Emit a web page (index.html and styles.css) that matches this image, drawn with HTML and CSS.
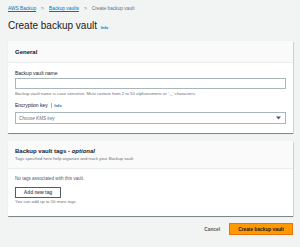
FILE: index.html
```html
<!DOCTYPE html>
<html>
<head>
<meta charset="utf-8">
<link rel="stylesheet" href="styles.css">
</head>
<body>
<nav class="crumbs">
  <a class="crumb-link" href="#">AWS Backup</a>
  <span class="sep">&gt;</span>
  <a class="crumb-link" href="#">Backup vaults</a>
  <span class="sep">&gt;</span>
  <span class="crumb-current">Create backup vault</span>
</nav>
<div class="page-head">
  <h1 class="title">Create backup vault</h1>
  <span class="info">Info</span>
</div>
<section class="card">
  <div class="card-head">
    <h2 class="card-title">General</h2>
  </div>
  <div class="card-body">
    <div class="field">
      <label class="label">Backup vault name</label>
      <div class="input"></div>
      <div class="desc">Backup vault name is case sensitive. Must contain from 2 to 50 alphanumeric or '-_' characters.</div>
    </div>
    <div class="field field-2">
      <div class="label-row"><span class="label">Encryption key</span><span class="vbar"></span><span class="info">Info</span></div>
      <div class="select"><span class="placeholder">Choose KMS key</span><svg class="caret" width="5" height="4" viewBox="0 0 5 4"><path d="M0 0.5h5L2.5 3.5z" fill="#545b64"/></svg></div>
    </div>
  </div>
</section>
<section class="card card-2">
  <div class="card-head card-head-2">
    <h2 class="card-title">Backup vault tags - <i>optional</i></h2>
    <div class="head-desc">Tags specified here help organize and track your Backup vault</div>
  </div>
  <div class="card-body card-body-2">
    <div class="empty">No tags associated with this vault.</div>
    <button class="btn">Add new tag</button>
    <div class="desc">You can add up to 50 more tags.</div>
  </div>
</section>
<div class="actions">
  <button class="btn-link">Cancel</button>
  <button class="btn-primary">Create backup vault</button>
</div>
</body>
</html>
```

FILE: styles.css
```css
html, body {
  margin: 0;
  padding: 0;
}
body {
  background: #f2f3f3;
  font-family: "Liberation Sans", Arial, sans-serif;
  color: #16191f;
  padding: 0 7px 0 8px;
  width: 300px;
  height: 247px;
  box-sizing: border-box;
  overflow: hidden;
}
.crumbs {
  display: flex;
  align-items: center;
  gap: 4px;
  height: 14px;
  font-size: 4.8px;
  padding-top: 1px;
}
.crumb-link {
  color: #0073bb;
  text-decoration: underline;
}
.sep {
  color: #687078;
  font-size: 5px;
  padding: 0 1px;
}
.crumb-current {
  color: #687078;
}
.page-head {
  display: flex;
  align-items: baseline;
  gap: 4px;
  height: 26px;
  padding-top: 5px;
  box-sizing: border-box;
}
.title {
  margin: 0;
  font-size: 10px;
  font-weight: 400;
  line-height: 12px;
}
.info {
  color: #0073bb;
  font-weight: 700;
  font-size: 4px;
}
.card {
  background: #fff;
  box-shadow: 0 0.5px 0.5px 0 rgba(0,28,36,.3), 0.5px 0.5px 0.5px 0 rgba(0,28,36,.15), -0.5px 0.5px 0.5px 0 rgba(0,28,36,.15);
}
.card-head {
  background: #fafafa;
  border-bottom: 1px solid #eaeded;
  padding: 7px 7px 0;
  height: 22px;
  box-sizing: border-box;
}
.card-title {
  margin: 0;
  font-size: 6px;
  font-weight: 700;
  line-height: 8px;
}
.card-title i {
  font-style: italic;
}
.card-body {
  padding: 7px 7px 9px;
  height: 70px;
  box-sizing: border-box;
}
.field {
  display: flex;
  flex-direction: column;
}
.label {
  font-size: 5px;
  line-height: 6px;
  color: #16191f;
}
.input {
  margin-top: 2px;
  height: 11px;
  border: 0.7px solid #aab7b8;
  box-sizing: border-box;
  background: #fff;
}
.desc {
  font-size: 4.3px;
  line-height: 6px;
  color: #687078;
  margin-top: 2px;
}
.field-2 {
  margin-top: 5px;
}
.label-row {
  display: flex;
  align-items: center;
  gap: 3px;
  height: 6px;
}
.vbar {
  width: 0.5px;
  height: 5px;
  background: #aab7b8;
}
.select {
  margin-top: 4px;
  height: 12px;
  border: 0.7px solid #aab7b8;
  box-sizing: border-box;
  display: flex;
  align-items: center;
  justify-content: space-between;
  padding: 0 4px 0 3px;
}
.placeholder {
  font-size: 4.6px;
  font-style: italic;
  color: #687078;
}
.card-2 {
  margin-top: 8px;
}
.card-head-2 {
  height: 28px;
  padding-top: 6px;
}
.head-desc {
  font-size: 4.3px;
  line-height: 6px;
  color: #687078;
  margin-top: 1px;
}
.card-body-2 {
  height: 47px;
  padding-top: 7px;
  display: flex;
  flex-direction: column;
  align-items: flex-start;
}
.empty {
  font-size: 4.6px;
  line-height: 6px;
  color: #545b64;
}
.btn {
  margin-top: 5px;
  height: 11px;
  width: 46px;
  padding: 0;
  border: 0.7px solid #545b64;
  background: #fff;
  font-family: inherit;
  font-size: 4.8px;
  font-weight: 700;
  color: #545b64;
}
.card-body-2 .desc {
  margin-top: 1px;
}
.actions {
  display: flex;
  justify-content: flex-end;
  align-items: center;
  gap: 9px;
  margin-top: 7px;
}
.btn-link {
  border: none;
  background: none;
  padding: 0;
  font-family: inherit;
  font-size: 4.8px;
  font-weight: 700;
  color: #545b64;
}
.btn-primary {
  height: 12px;
  width: 64px;
  padding: 0;
  border: 0.7px solid #ec7211;
  background: #ff9900;
  font-family: inherit;
  font-size: 4.8px;
  font-weight: 700;
  color: #16191f;
}
```
